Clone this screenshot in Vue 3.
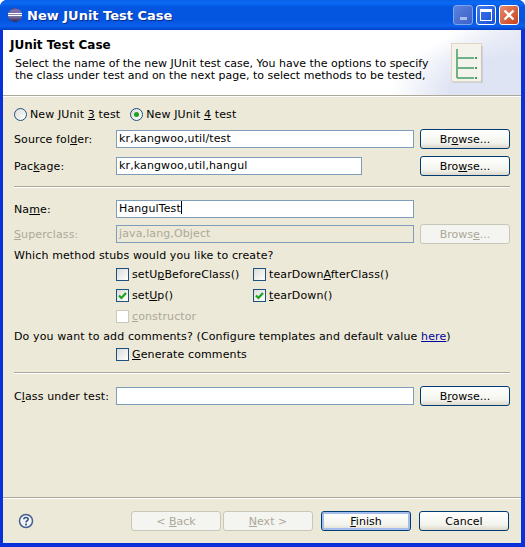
<template>
  <div class="window">
    <div class="titlebar">
      <svg class="app-icon" width="16" height="16" viewBox="0 0 16 16">
        <defs>
          <linearGradient id="sphere" x1="0" y1="0" x2="0" y2="1">
            <stop offset="0" stop-color="#473788" />
            <stop offset="0.5" stop-color="#8f8ab8" />
            <stop offset="1" stop-color="#2c2255" />
          </linearGradient>
        </defs>
        <circle cx="8" cy="8" r="7" fill="url(#sphere)" />
        <path d="M1 6.5h14M1 8.5h14" stroke="#fff" stroke-width="1" />
        <path d="M7 1.5a7 6.5 0 0 1 7 3H3a7 6.5 0 0 1 4-3z" fill="#ffffff" opacity="0.18" />
      </svg>
      <span class="title-text">New JUnit Test Case</span>
      <div class="win-buttons">
        <div class="win-btn inactive"><span class="min-glyph"></span></div>
        <div class="win-btn"><span class="max-glyph"></span></div>
        <div class="win-btn close">
          <svg width="12" height="12" viewBox="0 0 12 12">
            <path d="M1.5 1.5l9 9M10.5 1.5l-9 9" stroke="#fff" stroke-width="2.4" />
          </svg>
        </div>
      </div>
    </div>

    <div class="client">
      <div class="banner">
        <div class="banner-text">
          <div class="banner-title">JUnit Test Case</div>
          <div class="banner-desc">
            Select the name of the new JUnit test case, You have the options to specify<br />
            the class under test and on the next page, to select methods to be tested,
          </div>
        </div>
        <svg class="banner-icon" width="32" height="40" viewBox="0 0 32 40">
          <rect x="0.5" y="0.5" width="30" height="38" fill="#f3f3ec" stroke="#e3d5bd" />
          <path d="M31 3v37H2" fill="none" stroke="#9aa3b0" stroke-width="1" opacity="0.6" />
          <path d="M6 6v29M6 15h17M6 25h17M6 35h17" fill="none" stroke="#6fb086" stroke-width="2" />
          <path d="M24 14h2v2h-2zM24 24h2v2h-2zM24 34h2v2h-2z" fill="#4d8f68" />
        </svg>
      </div>

      <div class="form">
        <div class="radio-row">
          <label class="choice">
            <span class="radio"></span>
            <span>New JUnit <u>3</u> test</span>
          </label>
          <label class="choice second">
            <span class="radio on"></span>
            <span>New JUnit <u>4</u> test</span>
          </label>
        </div>

        <div class="row r-source">
          <span class="label">Source fol<u>d</u>er:</span>
          <div class="input">kr,kangwoo,util/test</div>
          <button class="btn">Br<u>o</u>wse...</button>
        </div>
        <div class="row r-package">
          <span class="label">Pac<u>k</u>age:</span>
          <div class="input short">kr,kangwoo,util,hangul</div>
          <button class="btn">Bro<u>w</u>se...</button>
        </div>

        <div class="sep s-first"></div>

        <div class="row">
          <span class="label">Na<u>m</u>e:</span>
          <div class="input">HangulTest<i class="caret"></i></div>
        </div>
        <div class="row r-super">
          <span class="label muted"><u>S</u>uperclass:</span>
          <div class="input disabled">java,lang,Object</div>
          <button class="btn" disabled>Brows<u>e</u>...</button>
        </div>

        <div class="line l-stubs">Which method stubs would you like to create?</div>

        <div class="checks">
          <label v-for="item in stubs" :key="item.id" class="check-item" :class="{ muted: item.disabled }">
            <span class="check" :class="{ off: item.disabled }">
              <svg v-if="item.checked" width="11" height="11" viewBox="0 0 11 11">
                <path d="M2 5.5l2.4 2.5L9 3" fill="none" stroke="#21a121" stroke-width="2.2" />
              </svg>
            </span>
            <span>{{ item.before }}<u>{{ item.key }}</u>{{ item.after }}</span>
          </label>
        </div>

        <div class="line l-comments">
          Do you want to add comments? (Configure templates and default value <u class="link">here</u>)
        </div>
        <label class="check-item l-generate">
          <span class="check"></span>
          <span><u>G</u>enerate comments</span>
        </label>

        <div class="sep s-second"></div>

        <div class="row">
          <span class="label">C<u>l</u>ass under test:</span>
          <div class="input"></div>
          <button class="btn">B<u>r</u>owse...</button>
        </div>
      </div>

      <div class="footer">
        <svg class="help" width="16" height="16" viewBox="0 0 16 16">
          <circle cx="8" cy="8" r="6.5" fill="#f4f6fb" stroke="#46608f" stroke-width="1.5" />
          <path d="M5.8 6.2C5.8 3.9 10.2 3.9 10.2 6.2C10.2 7.8 8 7.6 8 9.6" fill="none" stroke="#34507f" stroke-width="1.6" />
          <rect x="7.1" y="10.6" width="1.8" height="1.8" fill="#34507f" />
        </svg>
        <div class="footer-buttons">
          <button class="btn" disabled>&lt; <u>B</u>ack</button>
          <button class="btn next" disabled><u>N</u>ext &gt;</button>
          <button class="btn default finish"><u>F</u>inish</button>
          <button class="btn cancel">Cancel</button>
        </div>
      </div>
    </div>
  </div>
</template>

<script setup>
const stubs = [
  { id: 1, before: 'setU', key: 'p', after: 'BeforeClass()', checked: false },
  { id: 2, before: 'tearDown', key: 'A', after: 'fterClass()', checked: false },
  { id: 3, before: 'set', key: 'U', after: 'p()', checked: true },
  { id: 4, before: '', key: 't', after: 'earDown()', checked: true },
  { id: 5, before: '', key: 'c', after: 'onstructor', checked: false, disabled: true }
]
</script>

<style>
html, body {
  margin: 0;
  background: #fff;
}
</style>

<style scoped>
.window {
  width: 525px;
  height: 547px;
  display: flex;
  flex-direction: column;
  box-sizing: border-box;
  font-family: "DejaVu Sans", sans-serif;
  font-size: 11px;
  color: #000;
  background: #0831d9;
  border-radius: 7px 7px 0 0;
  overflow: hidden;
}

.titlebar {
  height: 30px;
  flex: none;
  display: flex;
  align-items: center;
  padding: 0 6px 0 7px;
  box-sizing: border-box;
  background: linear-gradient(#0a5fe8 0, #0a6af5 3px, #0456e0 7px, #0454e0 20px, #0a60ec 26px, #0340c8 30px);
}

.app-icon {
  flex: none;
}

.title-text {
  margin-left: 4px;
  font-weight: bold;
  font-size: 13px;
  color: #fff;
  text-shadow: 1px 1px 0 #0a2a8a;
}

.win-buttons {
  margin-left: auto;
  display: flex;
  gap: 3px;
}

.win-btn {
  width: 20px;
  height: 20px;
  box-sizing: border-box;
  display: flex;
  align-items: center;
  justify-content: center;
  border: 1px solid #fff;
  border-radius: 3px;
  background: linear-gradient(135deg, #3c7cf0, #1a4fd6);
}

.win-btn.inactive {
  border-color: #7fa3ec;
  background: linear-gradient(135deg, #5a82dc, #3c62c8);
}

.win-btn.close {
  background: linear-gradient(135deg, #e88a6c, #c8401c);
}

.min-glyph {
  width: 7px;
  height: 3px;
  margin-top: 6px;
  background: #a9bdec;
}

.max-glyph {
  width: 12px;
  height: 12px;
  box-sizing: border-box;
  border: 1px solid #fff;
  border-top-width: 3px;
}

.client {
  flex: 1;
  margin: 0 4px 4px 3px;
  display: flex;
  flex-direction: column;
  background: #ece9d8;
  min-height: 0;
}

.banner {
  height: 66px;
  flex: none;
  display: flex;
  box-sizing: border-box;
  padding: 0 38px 0 7px;
  justify-content: space-between;
  align-items: flex-end;
  background: radial-gradient(ellipse 130px 70px at 100% 100%, #dfe4f4 55%, transparent 100%),
    linear-gradient(100deg, #fff 84%, #e6e9f6 100%);
  border-bottom: 1px solid #aca899;
}

.banner-text {
  align-self: flex-start;
}

.banner-title {
  margin-top: 8px;
  font-weight: bold;
  font-size: 12px;
  line-height: 14px;
}

.banner-desc {
  margin: 6px 0 0 5px;
  line-height: 12px;
  white-space: nowrap;
}

.banner-icon {
  flex: none;
  margin-bottom: 12px;
}

.form {
  flex: 1;
  display: flex;
  flex-direction: column;
  padding: 11px 0 0 11px;
  letter-spacing: 0.12px;
  box-shadow: inset 0 1px 0 #fff;
}

.radio-row {
  display: flex;
  height: 14px;
  margin-bottom: 8px;
}

.choice,
.check-item {
  display: flex;
  align-items: center;
  gap: 3px;
  white-space: nowrap;
}

.choice.second {
  margin-left: 10px;
}

.radio {
  width: 13px;
  height: 13px;
  box-sizing: border-box;
  border: 1px solid #1c5180;
  border-radius: 50%;
  background: linear-gradient(135deg, #dcdcd7, #fff);
  display: flex;
  align-items: center;
  justify-content: center;
}

.radio.on::after {
  content: "";
  width: 5px;
  height: 5px;
  border-radius: 50%;
  background: #21a121;
}

.row {
  display: flex;
  align-items: center;
  height: 20px;
}

.label {
  width: 102px;
  flex: none;
  white-space: nowrap;
}

.input {
  width: 298px;
  height: 18px;
  line-height: 16px;
  box-sizing: border-box;
  flex: none;
  margin-right: 6px;
  padding-left: 2px;
  border: 1px solid #7f9db9;
  background: #fff;
  white-space: nowrap;
}

.input.short {
  width: 246px;
  margin-right: 58px;
}

.input.disabled {
  background: #ece9d8;
  color: #aca899;
}

.caret {
  display: inline-block;
  width: 1px;
  height: 13px;
  vertical-align: -2px;
  background: #000;
}

.btn {
  width: 90px;
  height: 20px;
  flex: none;
  padding: 0;
  font: inherit;
  color: #000;
  border: 1px solid #003c74;
  border-radius: 3px;
  background: linear-gradient(#fff, #f4f4ee 70%, #dcd8cc);
}

.btn:disabled {
  color: #aca899;
  border-color: #c9c7ba;
  background: #f4f4f0;
}

.btn.default {
  box-shadow: inset 0 0 0 2px #a4bdec;
}

.r-package {
  margin-top: 7px;
}

.r-super {
  margin-top: 5px;
}

.muted {
  color: #aca899;
}

.link {
  color: #00009c;
}

.sep {
  height: 1px;
  margin-right: 11px;
  background: #aca899;
  box-shadow: 0 1px 0 #fff;
}

.s-first {
  margin-top: 10px;
  margin-bottom: 12px;
}

.line {
  height: 16px;
  line-height: 16px;
  white-space: nowrap;
}

.l-stubs {
  margin-top: 4px;
}

.checks {
  display: grid;
  grid-template-columns: 137px auto;
  grid-auto-rows: 21px;
  margin: 0 0 0 102px;
}

.check {
  width: 13px;
  height: 13px;
  box-sizing: border-box;
  flex: none;
  display: flex;
  align-items: center;
  justify-content: center;
  border: 1px solid #1c5180;
  background: linear-gradient(135deg, #dcdcd7, #fff);
}

.check.off {
  border-color: #cac8bb;
  background: #fff;
}

.l-comments {
  margin-top: 2px;
}

.l-generate {
  height: 20px;
  margin: -1px 0 0 102px;
}

.s-second {
  margin-top: 8px;
  margin-bottom: 13px;
}

.footer {
  height: 46px;
  flex: none;
  display: flex;
  align-items: center;
  padding: 1px 12px 0 15px;
  box-sizing: border-box;
  border-top: 1px solid #aca899;
  box-shadow: inset 0 1px 0 #fff;
}

.help {
  flex: none;
}

.footer-buttons {
  margin-left: auto;
  display: flex;
}

.next {
  margin-left: 2px;
}

.finish,
.cancel {
  margin-left: 8px;
}
</style>
